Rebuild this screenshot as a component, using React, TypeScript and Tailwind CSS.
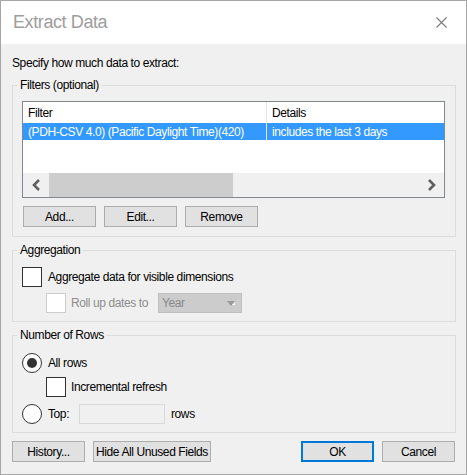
import type { ReactNode } from "react";

function Button({
  children,
  className = "",
  primary = false,
}: {
  children: ReactNode;
  className?: string;
  primary?: boolean;
}) {
  return (
    <button
      type="button"
      className={`h-[21px] whitespace-nowrap bg-[#e1e1e1] text-[12px] leading-none text-black ${
        primary ? "border-2 border-[#0078d7]" : "border border-[#adadad]"
      } ${className}`}
    >
      {children}
    </button>
  );
}

function GroupBox({
  label,
  children,
  className = "",
}: {
  label: string;
  children: ReactNode;
  className?: string;
}) {
  return (
    <fieldset
      className={`border border-[#dcdcdc] pl-[9px] pr-[10px] ${className}`}
    >
      <legend className="-ml-[5px] px-[3px] text-[12px] leading-[16px]">
        {label}
      </legend>
      {children}
    </fieldset>
  );
}

function CheckBox({ disabled = false }: { disabled?: boolean }) {
  return (
    <span
      className={`block h-[20px] w-[20px] shrink-0 bg-white border ${
        disabled ? "border-[#cccccc]" : "border-[#333333]"
      }`}
    />
  );
}

function Radio({ checked = false }: { checked?: boolean }) {
  return (
    <span className="flex h-[20px] w-[20px] shrink-0 items-center justify-center rounded-full border border-[#333333] bg-white">
      {checked && <span className="h-[10px] w-[10px] rounded-full bg-[#333333]" />}
    </span>
  );
}

function Chevron({ dir }: { dir: "left" | "right" }) {
  return (
    <svg width="9" height="12" viewBox="0 0 9 12">
      <path
        d={dir === "left" ? "M7 1 L2 6 L7 11" : "M2 1 L7 6 L2 11"}
        fill="none"
        stroke="#606060"
        strokeWidth="2.6"
      />
    </svg>
  );
}

export default function App() {
  return (
    <div className="flex h-[475px] w-[467px] flex-col border border-[#a6a6a6] bg-[#f0f0f0] font-['Liberation_Sans',Arial,sans-serif] text-[12px] tracking-[-0.4px] text-black">
      {/* title bar */}
      <div className="flex h-[43px] shrink-0 items-center justify-between bg-white pl-[12px] pr-[19px]">
        <span className="text-[18px] tracking-[-0.4px] text-[#9d9d9d]">
          Extract Data
        </span>
        <svg width="11" height="11" viewBox="0 0 11 11">
          <path d="M0.5 0.5 L10.5 10.5 M10.5 0.5 L0.5 10.5" stroke="#7a7a7a" strokeWidth="1.1" />
        </svg>
      </div>

      <div className="flex flex-col pl-[11px] pr-[10px] pt-[11px]">
        <p className="leading-[16px]">Specify how much data to extract:</p>

        <GroupBox label="Filters (optional)" className="mt-[6px] pb-[9px] pt-[8px]">
          <div className="flex h-[97px] w-[423px] flex-col border border-[#828790] bg-white">
            <div className="flex h-[21px] shrink-0 items-center">
              <span className="w-[243px] pl-[5px]">Filter</span>
              <span className="h-full w-px bg-[#e5e5e5]" />
              <span className="pl-[5px]">Details</span>
            </div>
            <div className="flex h-[17px] shrink-0 items-center bg-[#3399ff] text-white">
              <span className="w-[243px] pl-[5px]">
                (PDH-CSV 4.0) (Pacific Daylight Time)(420)
              </span>
              <span className="h-full w-px bg-[#e5e5e5]" />
              <span className="pl-[5px]">includes the last 3 days</span>
            </div>
            <div className="h-[33px] shrink-0" />
            <div className="flex h-[24px] shrink-0 items-center bg-[#f0f0f0]">
              <div className="flex w-[26px] justify-center">
                <Chevron dir="left" />
              </div>
              <div className="h-full w-[184px] bg-[#cdcdcd]" />
              <div className="flex-1" />
              <div className="flex w-[26px] justify-center">
                <Chevron dir="right" />
              </div>
            </div>
          </div>
          <div className="mt-[8px] flex gap-[8px] pl-[1px]">
            <Button className="w-[73px]">Add...</Button>
            <Button className="w-[73px]">Edit...</Button>
            <Button className="w-[73px]">Remove</Button>
          </div>
        </GroupBox>

        <GroupBox label="Aggregation" className="mt-[5px] pb-[8px] pt-[9px]">
          <div className="flex items-center gap-[6px]">
            <CheckBox />
            <span>Aggregate data for visible dimensions</span>
          </div>
          <div className="mt-[6px] flex items-center pl-[24px]">
            <CheckBox disabled />
            <span className="ml-[5px] w-[87px] text-[#8d8d8d]">Roll up dates to</span>
            <div className="flex h-[20px] w-[84px] items-center justify-between border border-[#bfbfbf] bg-[#cccccc] pl-[3px] pr-[6px] text-[#8a8a8a]">
              <span>Year</span>
              <svg width="8" height="5" viewBox="0 0 8 5">
                <path d="M0 0 H8 L4 5 Z" fill="#9a9a9a" />
                <path d="M5 4 L8 1 V4 Z" fill="#ffffff" />
              </svg>
            </div>
          </div>
        </GroupBox>

        <GroupBox label="Number of Rows" className="mt-[5px] pb-[8px] pt-[10px]">
          <div className="flex items-center gap-[6px]">
            <Radio checked />
            <span>All rows</span>
          </div>
          <div className="mt-[4px] flex items-center gap-[5px] pl-[24px]">
            <CheckBox />
            <span>Incremental refresh</span>
          </div>
          <div className="mt-[7px] flex items-center">
            <Radio />
            <span className="ml-[6px] w-[31px]">Top:</span>
            <span className="block h-[20px] w-[86px] border border-[#d9d9d9] bg-[#f0f0f0]" />
            <span className="ml-[6px]">rows</span>
          </div>
        </GroupBox>

        <div className="mt-[8px] flex items-center">
          <Button className="w-[73px]">History...</Button>
          <Button className="ml-[8px] w-[118px]">Hide All Unused Fields</Button>
          <Button primary className="ml-auto w-[73px]">
            OK
          </Button>
          <Button className="ml-[8px] mr-[1px] w-[73px]">Cancel</Button>
        </div>
      </div>
    </div>
  );
}
